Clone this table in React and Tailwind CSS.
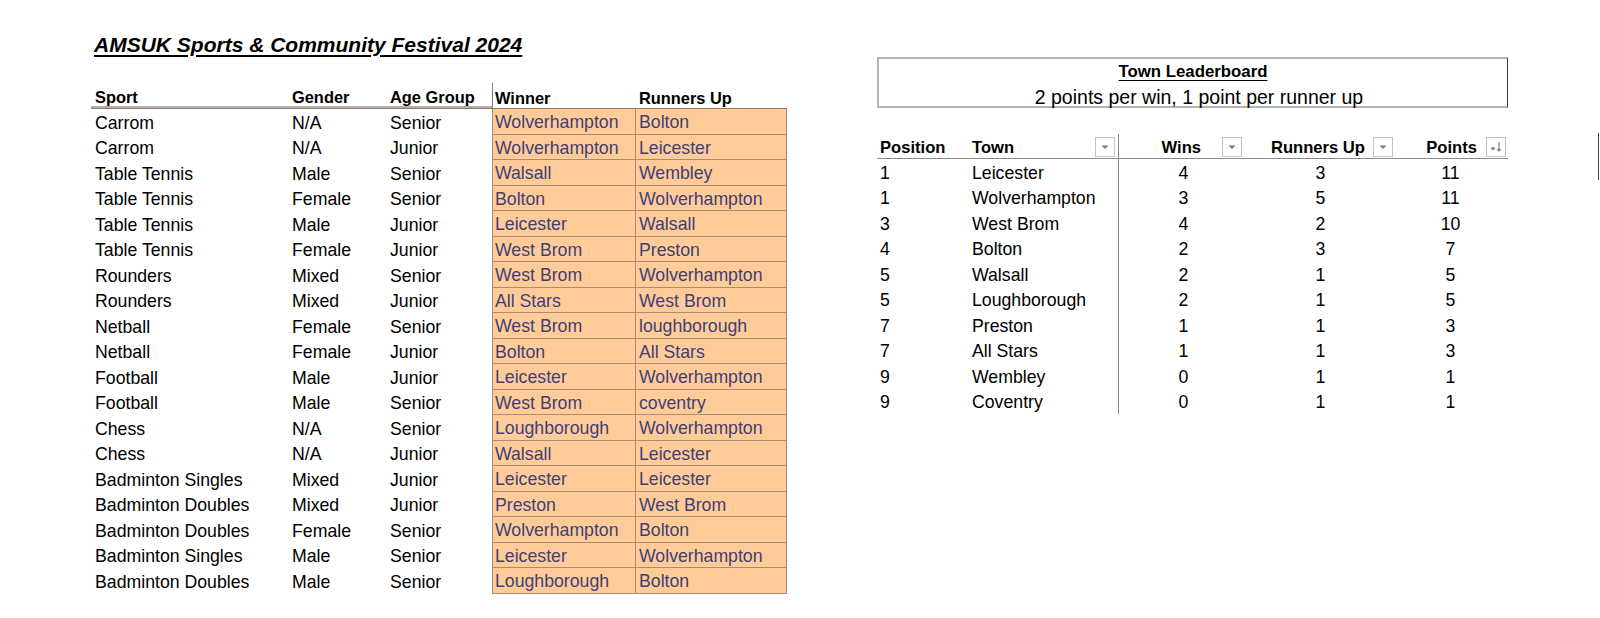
import React from "react";

const results = [
  ["Carrom", "N/A", "Senior", "Wolverhampton", "Bolton"],
  ["Carrom", "N/A", "Junior", "Wolverhampton", "Leicester"],
  ["Table Tennis", "Male", "Senior", "Walsall", "Wembley"],
  ["Table Tennis", "Female", "Senior", "Bolton", "Wolverhampton"],
  ["Table Tennis", "Male", "Junior", "Leicester", "Walsall"],
  ["Table Tennis", "Female", "Junior", "West Brom", "Preston"],
  ["Rounders", "Mixed", "Senior", "West Brom", "Wolverhampton"],
  ["Rounders", "Mixed", "Junior", "All Stars", "West Brom"],
  ["Netball", "Female", "Senior", "West Brom", "loughborough"],
  ["Netball", "Female", "Junior", "Bolton", "All Stars"],
  ["Football", "Male", "Junior", "Leicester", "Wolverhampton"],
  ["Football", "Male", "Senior", "West Brom", "coventry"],
  ["Chess", "N/A", "Senior", "Loughborough", "Wolverhampton"],
  ["Chess", "N/A", "Junior", "Walsall", "Leicester"],
  ["Badminton Singles", "Mixed", "Junior", "Leicester", "Leicester"],
  ["Badminton Doubles", "Mixed", "Junior", "Preston", "West Brom"],
  ["Badminton Doubles", "Female", "Senior", "Wolverhampton", "Bolton"],
  ["Badminton Singles", "Male", "Senior", "Leicester", "Wolverhampton"],
  ["Badminton Doubles", "Male", "Senior", "Loughborough", "Bolton"],
];

const board = [
  [1, "Leicester", 4, 3, 11],
  [1, "Wolverhampton", 3, 5, 11],
  [3, "West Brom", 4, 2, 10],
  [4, "Bolton", 2, 3, 7],
  [5, "Walsall", 2, 1, 5],
  [5, "Loughborough", 2, 1, 5],
  [7, "Preston", 1, 1, 3],
  [7, "All Stars", 1, 1, 3],
  [9, "Wembley", 0, 1, 1],
  [9, "Coventry", 0, 1, 1],
];

function FilterBtn({ sort, className = "ml-[8px]" }) {
  return (
    <span className={`${className} flex h-[20px] w-[20px] shrink-0 items-center justify-center border border-[#c4c4c4] bg-white`}>
      <svg width="14" height="14" viewBox="0 0 14 14">
        {sort ? (
          <>
            <path d="M1.5 7.5 L6.5 7.5 L4 10.5 Z" fill="#6f6f6f" />
            <path d="M10 2 V11 M8.2 9.2 L10 11 L11.8 9.2" stroke="#6f6f6f" strokeWidth="1.1" fill="none" />
          </>
        ) : (
          <path d="M3.5 5.5 L10.5 5.5 L7 9 Z" fill="#7a7a7a" />
        )}
      </svg>
    </span>
  );
}

export default function App() {
  return (
    <div
      className="relative h-[618px] w-[1600px] overflow-hidden bg-white text-[17.7px] text-black"
      style={{ fontFamily: '"Liberation Sans", Arial, sans-serif' }}
    >
      <div className="flex">
        {/* results sheet */}
        <div className="ml-[91px] w-[696px] pt-[31.5px]">
          <div className="flex h-[25.5px] items-center pl-[3px]">
            <span className="text-[21px] font-bold italic underline decoration-[1.5px] underline-offset-[3px]">
              AMSUK Sports &amp; Community Festival 2024
            </span>
          </div>
          <div className="h-[25.5px]" />
          <div className="flex h-[25.5px] text-[16.4px] font-bold">
            <div className="flex w-[197px] items-center border-b-2 border-[#b0b0b0] pl-[4px] pt-[6px]">Sport</div>
            <div className="flex w-[98px] items-center border-b-2 border-[#b0b0b0] pl-[4px] pt-[6px]">Gender</div>
            <div className="flex w-[106px] items-center border-b-2 border-[#b0b0b0] pl-[4px] pt-[6px]">Age Group</div>
            <div className="flex w-[143px] items-center border-l border-[#808080] pl-[2px] pt-[6px]">Winner</div>
            <div className="flex w-[152px] items-center pl-[4px] pt-[6px]">Runners Up</div>
          </div>
          <div className="border-t border-[#8c7b6c]">
            {results.map((r, i) => (
              <div key={i} className="flex h-[25.5px]">
                <div className="flex w-[197px] items-center pl-[4px] pt-[3px]">{r[0]}</div>
                <div className="flex w-[98px] items-center pl-[4px] pt-[3px]">{r[1]}</div>
                <div className="flex w-[106px] items-center pl-[4px] pt-[3px]">{r[2]}</div>
                <div className="flex w-[143px] items-center border-b border-l border-[#a88c74] bg-[#ffcc99] pl-[2px] pt-[3px] text-[#3f3f76]">
                  {r[3]}
                </div>
                <div className="flex w-[152px] items-center border-b border-l border-r border-[#a88c74] bg-[#ffcc99] pl-[3px] pt-[3px] text-[#3f3f76]">
                  {r[4]}
                </div>
              </div>
            ))}
          </div>
        </div>

        {/* leaderboard */}
        <div className="ml-[90px] w-[631px] pt-[57px]">
          <div className="flex h-[51px] flex-col border border-b-2 border-l-2 border-t-2 border-[#b4b4b4] border-r-[#3a3a3a]">
            <div className="flex h-[24px] items-center justify-center pt-[2px] text-[16.8px] font-bold">
              <span className="underline decoration-[1px] underline-offset-[3px]">Town Leaderboard</span>
            </div>
            <div className="flex flex-1 items-center justify-center pb-[1px] pl-[12px] text-[19.5px]">
              2 points per win, 1 point per runner up
            </div>
          </div>
          <div className="h-[25.5px]" />
          <div className="flex h-[25.5px] border-b border-[#8a8a8a] text-[16.6px] font-bold">
            <div className="flex w-[91px] items-center pl-[3px] pt-[5px]">Position</div>
            <div className="flex w-[151px] items-center justify-between border-r border-[#8a8a8a] pl-[4px] pr-[3px] pt-[3px]">
              <span className="pt-[2px]">Town</span>
              <FilterBtn />
            </div>
            <div className="flex w-[129px] items-center justify-end pr-[6px] pt-[3px]">
              <span className="pt-[2px]">Wins</span>
              <FilterBtn className="ml-[21px]" />
            </div>
            <div className="flex w-[145px] items-center justify-end pt-[3px]">
              <span className="pt-[2px]">Runners Up</span>
              <FilterBtn />
            </div>
            <div className="flex w-[115px] items-center justify-end pr-[2px] pt-[3px]">
              <span className="pt-[2px]">Points</span>
              <FilterBtn sort className="ml-[9px]" />
            </div>
          </div>
          {board.map((b, i) => (
            <div key={i} className="flex h-[25.5px]">
              <div className="flex w-[91px] items-center pl-[3px] pt-[3px]">{b[0]}</div>
              <div className="flex w-[151px] items-center border-r border-[#8a8a8a] pl-[4px] pt-[3px]">{b[1]}</div>
              <div className="flex w-[129px] items-center justify-center pt-[3px]">{b[2]}</div>
              <div className="flex w-[145px] items-center justify-center pt-[3px]">{b[3]}</div>
              <div className="flex w-[115px] items-center justify-center pt-[3px]">{b[4]}</div>
            </div>
          ))}
        </div>
      </div>
      <div className="absolute left-[1598px] top-[133px] h-[47px] w-px bg-[#404040]" />
    </div>
  );
}
